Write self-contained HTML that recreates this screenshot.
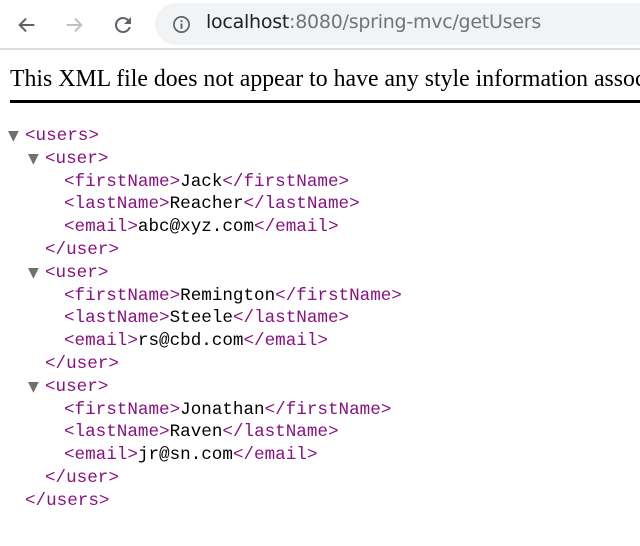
<!DOCTYPE html>
<html><head><meta charset="utf-8"><style>
*{margin:0;padding:0;box-sizing:border-box}
body{width:640px;height:546px;overflow:hidden;background:#fff;position:relative}
.bar{position:absolute;left:0;top:0;width:640px;height:50px;background:#fff;border-bottom:2px solid #dadce0}
.pill{position:absolute;left:155px;top:3px;width:485px;height:42px;border-radius:21px 0 0 21px;background:#f1f3f4}
.url{position:absolute;left:206px;top:11px;font:19px "DejaVu Sans","Liberation Sans",sans-serif;letter-spacing:-0.25px;color:#70757a;white-space:nowrap}
.url b{font-weight:normal;color:#202124}
.msg{position:absolute;left:10px;top:66px;width:630px;overflow:hidden;font:23.8px "Liberation Serif",serif;white-space:nowrap;color:#000}
.hr{position:absolute;left:10px;top:100px;width:630px;height:3px;background:#000}
.x{position:absolute;left:0;top:125px;width:640px;overflow:hidden;font:17.6px/22.8px "Liberation Mono",monospace;color:#000}
.x div{height:22.8px;white-space:pre}
.t{color:#881280}
.a{position:absolute;color:#707070;font-size:14px;font-family:"DejaVu Sans",sans-serif;margin-left:-17px}
</style></head><body>
<div class="bar">
<svg style="position:absolute;left:16px;top:14px" width="22" height="22" viewBox="0 0 24 24"><path d="M20 12H5M11 5l-7 7 7 7" stroke="#5f6368" stroke-width="2.2" fill="none"/></svg>
<svg style="position:absolute;left:63px;top:14px" width="22" height="22" viewBox="0 0 24 24"><path d="M4 12h15M13 5l7 7-7 7" stroke="#bdc1c6" stroke-width="2.2" fill="none"/></svg>
<svg style="position:absolute;left:111px;top:13px" width="24" height="24" viewBox="0 0 24 24"><path d="M17.65 6.35A7.96 7.96 0 0 0 12 4a8 8 0 1 0 7.73 10h-2.08A6 6 0 1 1 12 6c1.66 0 3.14.69 4.22 1.78L13 11h7V4l-2.35 2.35z" fill="#5f6368"/></svg>
<div class="pill"></div>
<svg style="position:absolute;left:172px;top:15px" width="19" height="19" viewBox="0 0 20 20"><circle cx="10" cy="10" r="8" stroke="#5f6368" stroke-width="1.8" fill="none"/><rect x="9" y="9" width="2" height="5.5" fill="#5f6368"/><rect x="9" y="5.5" width="2" height="2" fill="#5f6368"/></svg>
<div class="url"><b>localhost</b>:8080/spring-mvc/getUsers</div>
</div>
<div class="msg">This XML file does not appear to have any style information associated with it.</div>
<div class="hr"></div>
<div class="x"><div style="padding-left:25px"><span class="a">▼</span><span class="t">&lt;users&gt;</span></div><div style="padding-left:45px"><span class="a">▼</span><span class="t">&lt;user&gt;</span></div><div style="padding-left:64px"><span class="t">&lt;firstName&gt;</span>Jack<span class="t">&lt;/firstName&gt;</span></div><div style="padding-left:64px"><span class="t">&lt;lastName&gt;</span>Reacher<span class="t">&lt;/lastName&gt;</span></div><div style="padding-left:64px"><span class="t">&lt;email&gt;</span>abc@xyz.com<span class="t">&lt;/email&gt;</span></div><div style="padding-left:45px"><span class="t">&lt;/user&gt;</span></div><div style="padding-left:45px"><span class="a">▼</span><span class="t">&lt;user&gt;</span></div><div style="padding-left:64px"><span class="t">&lt;firstName&gt;</span>Remington<span class="t">&lt;/firstName&gt;</span></div><div style="padding-left:64px"><span class="t">&lt;lastName&gt;</span>Steele<span class="t">&lt;/lastName&gt;</span></div><div style="padding-left:64px"><span class="t">&lt;email&gt;</span>rs@cbd.com<span class="t">&lt;/email&gt;</span></div><div style="padding-left:45px"><span class="t">&lt;/user&gt;</span></div><div style="padding-left:45px"><span class="a">▼</span><span class="t">&lt;user&gt;</span></div><div style="padding-left:64px"><span class="t">&lt;firstName&gt;</span>Jonathan<span class="t">&lt;/firstName&gt;</span></div><div style="padding-left:64px"><span class="t">&lt;lastName&gt;</span>Raven<span class="t">&lt;/lastName&gt;</span></div><div style="padding-left:64px"><span class="t">&lt;email&gt;</span>jr@sn.com<span class="t">&lt;/email&gt;</span></div><div style="padding-left:45px"><span class="t">&lt;/user&gt;</span></div><div style="padding-left:25px"><span class="t">&lt;/users&gt;</span></div></div>
</body></html>
